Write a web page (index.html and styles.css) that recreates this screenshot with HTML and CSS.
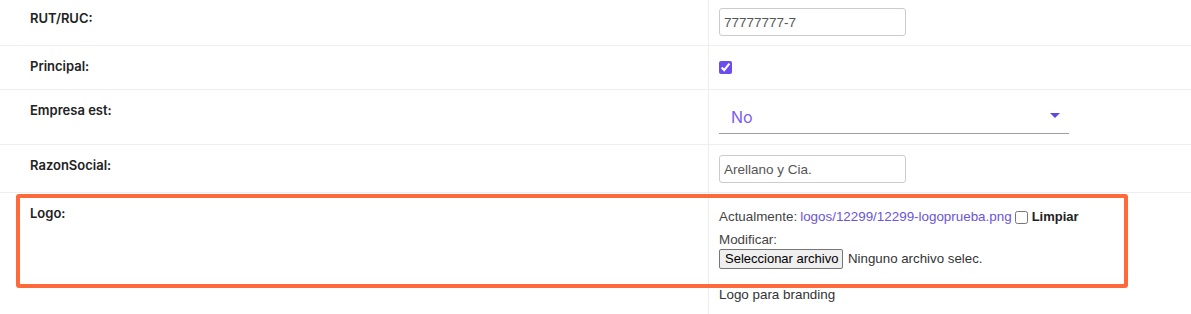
FILE: index.html
```html
<!DOCTYPE html>
<html lang="es">
<head>
<meta charset="utf-8">
<title>Empresa</title>
<link rel="stylesheet" href="styles.css">
</head>
<body>
<div class="form">
  <div class="row row--input">
    <div class="label">RUT/RUC:</div>
    <div class="field"><input class="text" type="text" value="77777777-7"></div>
  </div>
  <div class="row row--check">
    <div class="label">Principal:</div>
    <div class="field"><input class="check" type="checkbox" checked></div>
  </div>
  <div class="row row--select">
    <div class="label">Empresa est:</div>
    <div class="field">
      <div class="select">
        <span class="select-value">No</span>
        <svg class="select-arrow" width="10" height="5" viewBox="0 0 10 5"><path d="M0 0h10L5 5z" fill="#6246e0"/></svg>
      </div>
    </div>
  </div>
  <div class="row row--input">
    <div class="label">RazonSocial:</div>
    <div class="field"><input class="text" type="text" value="Arellano y Cia."></div>
  </div>
  <div class="row row--file">
    <div class="label">Logo:</div>
    <div class="field">
      <div class="current">Actualmente: <a class="link" href="#">logos/12299/12299-logoprueba.png</a><input class="clear-check" type="checkbox" id="clear"><label class="clear-label" for="clear">Limpiar</label></div>
      <div class="modify">Modificar:</div>
      <div class="filepick"><button class="file-btn" type="button">Seleccionar archivo</button><span class="file-name">Ninguno archivo selec.</span></div>
      <div class="help">Logo para branding</div>
    </div>
  </div>
</div>
<div class="highlight"></div>
</body>
</html>
```

FILE: styles.css
```css
html, body {
  margin: 0;
  padding: 0;
  background: #ffffff;
  overflow: hidden;
}

body {
  position: relative;
  width: 1191px;
  height: 314px;
  font-family: "Liberation Sans", Arial, sans-serif;
  color: #333;
}

.form {
  margin-top: -2px;
}

.row {
  display: grid;
  grid-template-columns: 708px 1fr;
  border-bottom: 1px solid #eeeeee;
}

.label {
  font-family: Inter, "Noto Sans", sans-serif;
  font-weight: 600;
  font-size: 13px;
  line-height: 16px;
  color: #222;
  padding: 12px 0 0 30px;
}

.field {
  border-left: 1px solid #eeeeee;
  padding: 10px 10px 10px 10px;
}

.row--input .field {
  padding: 10px 10px 9px 10px;
}

.text {
  display: block;
  box-sizing: border-box;
  width: 187px;
  height: 28px;
  margin: 0;
  padding: 0 4px;
  border: 1px solid #cccccc;
  border-radius: 3px;
  font-family: "Liberation Sans", Arial, sans-serif;
  font-size: 13.5px;
  color: #555;
  background: #fff;
  outline: none;
}

.row--check .field {
  padding: 15px 10px 15px 10px;
}

.check {
  display: block;
  width: 13px;
  height: 13px;
  margin: 0;
  accent-color: #6a4cef;
}

.row--select .field {
  padding: 10px 10px 10px 10px;
}

.select {
  box-sizing: border-box;
  width: 350px;
  height: 34px;
  padding: 0 9px 0 12px;
  display: flex;
  align-items: center;
  justify-content: space-between;
  border-bottom: 1px solid #9e9e9e;
}

.select-value {
  font-family: Inter, "Noto Sans", sans-serif;
  font-size: 16px;
  color: #7d5cf0;
}

.select-arrow {
  display: block;
  margin-top: -2px;
}

.row--file {
  border-bottom: none;
}

.row--file .field {
  padding: 15px 10px 10px 10px;
  font-size: 13.4px;
  line-height: 18px;
  color: #444;
}

.current {
  display: flex;
  align-items: center;
  height: 18px;
  white-space: nowrap;
}

.link {
  color: #6a55d8;
  text-decoration: none;
  margin-left: 3px;
}

.clear-check {
  width: 13px;
  height: 13px;
  margin: 0 4px 0 3px;
}

.clear-label {
  font-weight: bold;
  font-size: 13px;
  color: #222;
}

.modify {
  margin-top: 5px;
  color: #444;
}

.filepick {
  display: flex;
  align-items: center;
  height: 20px;
  white-space: nowrap;
}

.file-btn {
  box-sizing: border-box;
  width: 124px;
  height: 20px;
  margin: 0 5px 0 0;
  padding: 0 5px;
  white-space: nowrap;
  font-family: "Liberation Sans", Arial, sans-serif;
  font-size: 13px;
  line-height: 18px;
  color: #000;
  background: #efefef;
  border: 1px solid #767676;
  border-radius: 2px;
}

.file-name {
  font-size: 13.3px;
  color: #333;
}

.help {
  margin-top: 17px;
  color: #333;
}

.highlight {
  position: absolute;
  left: 16px;
  top: 194px;
  width: 1112px;
  height: 94px;
  box-sizing: border-box;
  border: 4px solid #ff6a3b;
  border-radius: 3px;
  pointer-events: none;
}
```
